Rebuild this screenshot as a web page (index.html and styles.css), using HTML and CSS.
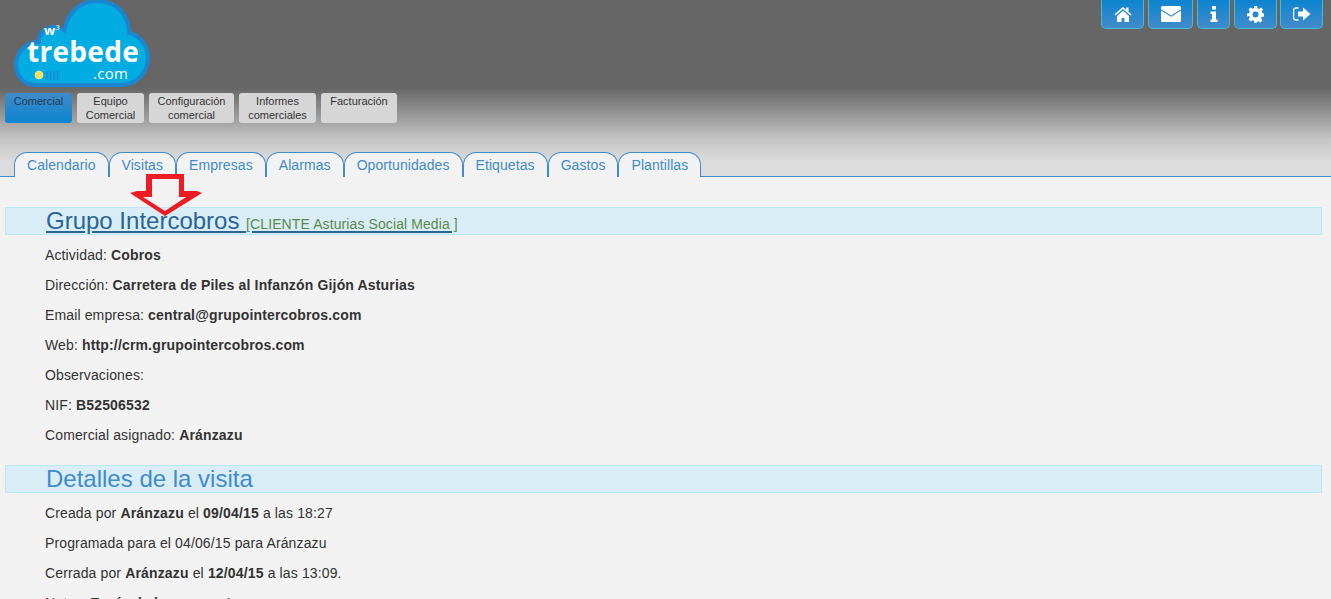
FILE: index.html
```html
<!DOCTYPE html>
<html lang="es">
<head>
<meta charset="utf-8">
<title>trebede</title>
<link rel="stylesheet" href="styles.css">
</head>
<body>
<header class="top">
  <div class="brand-row">
    <svg class="logo" width="138" height="89" viewBox="0 0 138 89">
      <path class="logo-edge" d="M22 88C8 88 1 77 1 66C1 52 11 42 24 41C24 33 31 26 41 26C45 26 48 27 50 29C53 12 66 0 84 0C104 0 117 13 118 32C130 36 137 47 137 58C137 76 124 88 108 88Z"/>
      <path class="logo-fill" d="M23 84C11 84 5 75 5 66C5 54 14 45 28 45C27 36 33 30 41 30C46 30 50 32 53 35C55 17 67 4 84 4C102 4 114 16 114 35C126 38 133 48 133 58C133 73 122 84 108 84Z"/>
      <text class="logo-w" x="31" y="36">w<tspan class="logo-sup" dy="-5">3</tspan></text>
      <text class="logo-name" x="14" y="63">trebede</text>
      <text class="logo-com" x="80" y="80">.com</text>
      <circle cx="26" cy="76" r="4" fill="#f7e04a" stroke="#ffffff" stroke-opacity=".5"/>
      <path d="M34 72v9M37.500 72v9M41 72v9M44.500 72v9" stroke="#1b86cf" stroke-width="1.500"/>
    </svg>
    <nav class="tools">
      <a class="tool tool-home"><svg width="18" height="16" viewBox="0 0 18 16"><path d="M9 1L0.500 8.300l1 1.100L9 3l7.500 6.400 1-1.100L14.500 5.700V1.500h-2.300v2.200zM3 10v6h4.500v-4h3v4H15v-6L9 4.800z" fill="#fff"/></svg></a>
      <a class="tool tool-mail"><svg width="20" height="16" viewBox="0 0 20 16"><path d="M1.500 0h17A1.500 1.500 0 0 1 20 1.500v1.800l-10 6.200L0 3.300V1.500A1.500 1.500 0 0 1 1.500 0zM0 4.500l10 6.200 10-6.200v10a1.500 1.500 0 0 1-1.500 1.500h-17A1.500 1.500 0 0 1 0 14.500z" fill="#fff"/></svg></a>
      <a class="tool tool-info"><svg width="8" height="16" viewBox="0 0 8 16"><path d="M2 0h4v3.500H2zM0.500 5.500H6V13.500h1.500V16H0.500V13.500H2V8H0.500z" fill="#fff"/></svg></a>
      <a class="tool tool-gear"><svg width="17" height="17" viewBox="0 0 17 17"><path fill-rule="evenodd" d="M7 0h3l.5 2.300 1.500.6 2-1.300 2 2-1.300 2 .6 1.500L17 7.500v3l-2.300.5-.6 1.500 1.300 2-2 2-2-1.300-1.500.6L9.500 17h-2L7 14.800l-1.500-.6-2 1.300-2-2 1.300-2-.6-1.500L0 10.500v-3l2.200-.5.600-1.500-1.300-2 2-2 2 1.300L7 2.300zM8.500 5.500a3 3 0 1 0 0 6 3 3 0 0 0 0-6z" fill="#fff"/></svg></a>
      <a class="tool tool-exit"><svg width="18" height="14" viewBox="0 0 18 14"><path d="M5.500 1H3a2.500 2.500 0 0 0-2.500 2.500v7A2.500 2.500 0 0 0 3 13h2.500" fill="none" stroke="#fff" stroke-width="1.400"/><path d="M5 4.500h5V.500L17.500 7 10 13.500v-4H5z" fill="#fff"/></svg></a>
    </nav>
  </div>
  <nav class="modules">
    <a class="module module-active">Comercial</a>
    <a class="module module-equipo">Equipo<br>Comercial</a>
    <a class="module module-config">Configuración<br>comercial</a>
    <a class="module module-informes">Informes<br>comerciales</a>
    <a class="module module-fact">Facturación</a>
  </nav>
  <nav class="tabs">
    <a class="tab">Calendario</a>
    <a class="tab">Visitas</a>
    <a class="tab">Empresas</a>
    <a class="tab">Alarmas</a>
    <a class="tab">Oportunidades</a>
    <a class="tab">Etiquetas</a>
    <a class="tab">Gastos</a>
    <a class="tab">Plantillas</a>
  </nav>
</header>
<main class="content">
  <svg class="arrow" width="72" height="43" viewBox="0 0 72 43">
    <path fill-rule="evenodd" d="M16 0H54V17H67L72 19L35 42L0 19L7 17H16ZM22 5V23H13L35 37L56 23H49V5Z" fill="#ed1c24"/>
  </svg>
  <h2 class="band"><a class="band-link">Grupo Intercobros <small class="band-sub">[CLIENTE Asturias Social Media ]</small></a></h2>
  <p>Actividad: <b>Cobros</b></p>
  <p>Dirección: <b>Carretera de Piles al Infanzón Gijón Asturias</b></p>
  <p>Email empresa: <b>central@grupointercobros.com</b></p>
  <p>Web: <b>http://crm.grupointercobros.com</b></p>
  <p>Observaciones:</p>
  <p>NIF: <b>B52506532</b></p>
  <p>Comercial asignado: <b>Aránzazu</b></p>
  <h2 class="band band-second">Detalles de la visita</h2>
  <p>Creada por <b>Aránzazu</b> el <b>09/04/15</b> a las 18:27</p>
  <p>Programada para el 04/06/15 para Aránzazu</p>
  <p>Cerrada por <b>Aránzazu</b> el <b>12/04/15</b> a las 13:09.</p>
  <p>Notas: <b>Envío de la propuesta</b></p>
</main>
</body>
</html>
```
FILE: styles.css
```css
html, body { margin: 0; padding: 0; height: 599px; overflow: hidden; }
body { background: #f2f2f2; color: #333; font-family: "Liberation Sans", Arial, sans-serif; font-size: 14px; }
.top { height: 177px; box-sizing: border-box; position: relative; background: linear-gradient(to bottom, #666 0, #666 88px, #aaa 125px, #c6c6c6 140px, #dcdcdc 162px, #dcdcdc 177px); border-bottom: 1px solid #428bca; }
.brand-row { height: 93px; display: flex; justify-content: space-between; align-items: flex-start; }
.logo { margin: -1px 0 0 13px; flex: none; }
.logo-edge { fill: #1b86cf; }
.logo-fill { fill: #00ace2; }
.logo-w { fill: #fff; font: bold 13px "Open Sans", sans-serif; }
.logo-sup { font-size: 8px; font-weight: normal; }
.logo-name { fill: #fff; font: bold 28px "Open Sans", sans-serif; letter-spacing: .3px; }
.logo-com { fill: #fff; font: 15px "Open Sans", sans-serif; letter-spacing: .3px; }
.tools { display: flex; gap: 4px; margin-right: 8px; }
.tool { height: 29px; display: flex; align-items: center; justify-content: center; box-sizing: border-box; border: 1px solid #46b8da; border-top: 0; border-radius: 0 0 5px 5px; background: linear-gradient(to bottom, #0c85d0, #428bca); }
.tool-home { width: 43px; }
.tool-mail { width: 45px; }
.tool-info { width: 33px; }
.tool-gear { width: 43px; margin-right: -1px; }
.tool-exit { width: 43px; }
.modules { display: flex; gap: 5px; padding-left: 5px; height: 30px; }
.module { box-sizing: border-box; height: 30px; padding-top: 1px; text-align: center; font-size: 11px; line-height: 14px; color: #333; background: #d6d6d6; border-radius: 3px; }
.module-active { width: 67px; background: linear-gradient(to bottom, #428bca, #0c85d0); color: #1f3a55; }
.module-equipo { width: 67px; }
.module-config { width: 85px; }
.module-informes { width: 77px; }
.module-fact { width: 76px; }
.tabs { position: absolute; left: 14px; bottom: -1px; display: flex; }
.tab { height: 25px; box-sizing: border-box; padding: 4px 12px 0; font-size: 14px; line-height: 17px; letter-spacing: .08px; color: #428bca; background: #f2f2f2; border: 1px solid #428bca; border-bottom: 0; border-radius: 13px 13px 0 0; }
.content { position: relative; padding: 30px 9px 0 5px; }
.arrow { position: absolute; left: 130px; top: -3px; z-index: 1; }
.band { margin: 0; height: 28px; box-sizing: border-box; padding-left: 40px; background: #d9edf7; border: 1px solid #bce8f1; font-size: 24px; font-weight: normal; line-height: 26px; color: #428bca; }
.band-second { margin-top: 10px; }
.band-link { color: #2a6496; text-decoration: underline; }
.band-sub { font-size: 14px; color: #5a8a4a; letter-spacing: .1px; }
.content p { margin: 0; height: 30px; padding-left: 40px; line-height: 20px; font-size: 14px; letter-spacing: .13px; }
.content b { letter-spacing: .16px; }
.band + p { margin-top: 10px; }
```
